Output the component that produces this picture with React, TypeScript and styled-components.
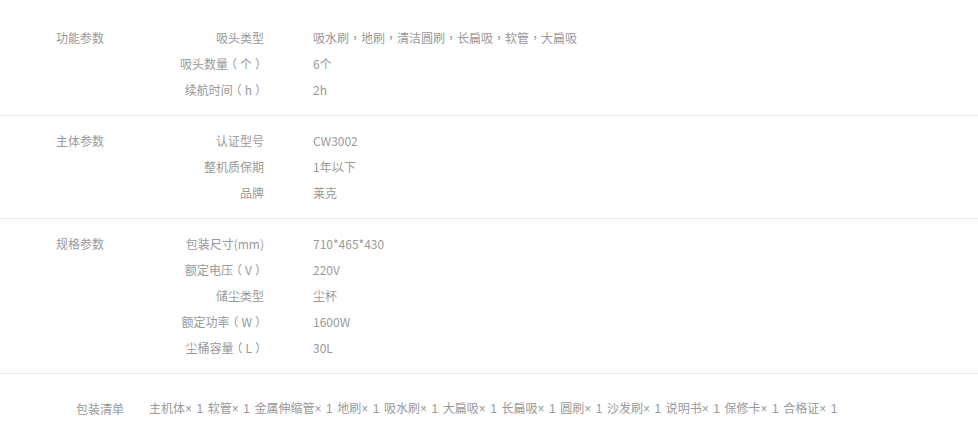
import styled, { createGlobalStyle } from "styled-components";

const GlobalStyle = createGlobalStyle`
    body {
        margin: 0;
        background: #fff;
        font-family: "Noto Sans CJK TC", "Noto Sans", sans-serif;
        font-size: 12px;
        color: #999;
    }
`;

type Param = { key: string; value: string };
type Group = { title: string; params: Param[] };

const groups: Group[] = [
    {
        title: "功能参数",
        params: [
            { key: "吸头类型", value: "吸水刷，地刷，清洁圆刷，长扁吸，软管，大扁吸" },
            { key: "吸头数量（个）", value: "6个" },
            { key: "续航时间（h）", value: "2h" },
        ],
    },
    {
        title: "主体参数",
        params: [
            { key: "认证型号", value: "CW3002" },
            { key: "整机质保期", value: "1年以下" },
            { key: "品牌", value: "莱克" },
        ],
    },
    {
        title: "规格参数",
        params: [
            { key: "包装尺寸(mm)", value: "710*465*430" },
            { key: "额定电压（V）", value: "220V" },
            { key: "储尘类型", value: "尘杯" },
            { key: "额定功率（W）", value: "1600W" },
            { key: "尘桶容量（L）", value: "30L" },
        ],
    },
];

const packing = [
    "主机体", "软管", "金属伸缩管", "地刷", "吸水刷", "大扁吸", "长扁吸",
    "圆刷", "沙发刷", "说明书", "保修卡", "合格证",
];

// full-width brackets sit centred in their cell, as in the original font
const withParens = (text: string) =>
    text.split(/([（）])/).map((part, i) =>
        part === "（" || part === "）" ? <Paren key={i}>{part}</Paren> : part
    );

export default function App() {
    return (
        <>
            <GlobalStyle />
            <Page>
                {groups.map((g) => (
                    <Section key={g.title}>
                        <GroupTitle>{g.title}</GroupTitle>
                        <ParamList>
                            {g.params.map((p) => (
                                <ParamRow key={p.key}>
                                    <ParamKey>{withParens(p.key)}</ParamKey>
                                    <ParamValue>{p.value}</ParamValue>
                                </ParamRow>
                            ))}
                        </ParamList>
                    </Section>
                ))}
                <PackSection>
                    <PackTitle>包装清单</PackTitle>
                    <PackItems>
                        {packing.map((item) => `${item}× 1`).join(" ")}
                    </PackItems>
                </PackSection>
            </Page>
        </>
    );
}

const Page = styled.div`
    padding-top: 13px;
`;

const Section = styled.div`
    display: flex;
    align-items: flex-start;
    padding: 12px 0 12px 56px;
    border-bottom: 1px solid #ececec;
`;

const GroupTitle = styled.div`
    width: 100px;
    line-height: 26px;
    flex-shrink: 0;
`;

const ParamList = styled.div`
    display: flex;
    flex-direction: column;
`;

const ParamRow = styled.div`
    display: flex;
    height: 26px;
    line-height: 26px;
`;

const ParamKey = styled.div`
    width: 108px;
    text-align: right;
    white-space: nowrap;
`;

const Paren = styled.span`
    display: inline-block;
    width: 12px;
    text-align: center;
    font-feature-settings: "halt";
`;

const ParamValue = styled.div`
    margin-left: 49px;
    white-space: nowrap;
`;

const PackSection = styled.div`
    display: flex;
    padding: 22px 0 22px 76px;
    line-height: 26px;
`;

const PackTitle = styled.div`
    width: 73px;
    flex-shrink: 0;
`;

const PackItems = styled.div`
    white-space: nowrap;
    word-spacing: 1.2px;
    font-family: "Liberation Sans", "Noto Sans CJK TC", sans-serif;
`;
